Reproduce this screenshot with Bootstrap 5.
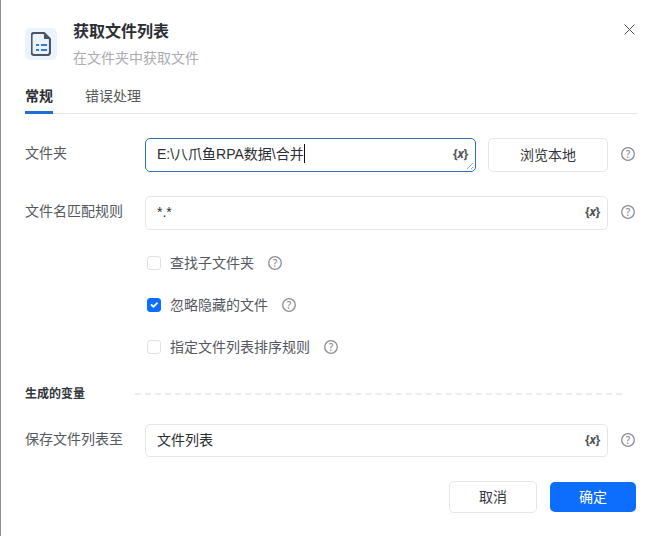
<!DOCTYPE html>
<html lang="zh-CN">

<head>
    <meta charset="UTF-8">
    <meta name="viewport" content="width=device-width, initial-scale=1.0">
    <link rel="stylesheet" href="https://cdn.jsdelivr.net/npm/bootstrap@5.3.1/dist/css/bootstrap.min.css">
    <title>获取文件列表</title>
    <style>
        html, body { height: 536px; overflow: hidden; }
        body {
            font-family: "Noto Sans", "Noto Sans CJK SC", sans-serif;
            font-size: 14px;
            color: #33363b;
            background: #fff;
        }
        .dialog { height: 536px; border-left: 1px solid #8f8f8f; padding: 0 18px 0 24px; }
        .dialog-head { padding-top: 19px; height: 86px; }
        .tile { width: 32px; height: 32px; margin-top: 9px; margin-right: 16px; background: #edf3fc; border-radius: 5px; }
        .title { font-size: 16px; font-weight: 700; line-height: 24px; color: #2b2e33; }
        .subtitle { line-height: 20px; margin-top: 5px; color: #a9acb1; }
        .btn-close-x { width: 11px; height: 11px; margin: 5px 1px 0 0; border: 0; padding: 0; background: none; }
        .tabs { height: 28px; margin-right: -1px; border-bottom: 1px solid #e3e4e6; gap: 32px; }
        .tab { line-height: 20px; padding-bottom: 8px; height: 28px; color: #55585e; }
        .tab.active { font-weight: 700; color: #2b2e33; border-bottom: 3px solid #1f6fd6; }
        .row-folder { margin-top: 24px; }
        .row-pattern { margin-top: 24px; }
        .row-save { margin-top: 21px; }
        .field-row { height: 34px; }
        .row-save.field-row { height: 33px; }
        .field-label { width: 120px; flex: none; line-height: 30px; color: #55585e; }
        .field {
            height: 100%;
            border: 1px solid #e4e5e7;
            border-radius: 5px;
            padding: 0 7px 0 11px;
            font-family: "Liberation Sans", "Noto Sans CJK SC", sans-serif;
            font-size: 14px;
            color: #2b2e33;
            line-height: 30px;
        }
        .field.focused { border-color: #2a6fb8; }
        .caret-bar { display: inline-block; width: 1px; height: 19px; background: #111; vertical-align: -4px; }
        .var-tag { font-family: "Noto Sans", sans-serif; font-size: 12px; font-weight: 700; color: #4d5157; letter-spacing: -0.3px; }
        .resize-grip { position: absolute; right: 1px; bottom: 1px; width: 8px; height: 8px; }
        .browse-btn {
            width: 120px;
            height: 34px;
            margin-left: 12px;
            border: 1px solid #e4e5e7;
            border-radius: 5px;
            background: #fff;
            color: #33363b;
            font-size: 14px;
            padding: 0 0 2px;
        }
        .help { width: 14px; height: 14px; flex: none; }
        .field-row .help { margin: 0 1px 2px 13px; }
        .row-save .help { margin-bottom: 1px; }
        .check-row { height: 16px; margin-left: 120px; margin-top: 26px; color: #55585e; }
        .check-row.first { margin-top: 25px; }
        .check-row .form-check-input {
            width: 14px;
            height: 14px;
            margin: 0 9px 0 2px;
            border-color: #dfe0e2;
            border-radius: 3px;
        }
        .check-row .form-check-input:checked { background-color: #0d6efd; border-color: #0d6efd; }
        .check-row label { margin-right: 14px; padding-bottom: 2px; }
        .section { margin-top: 30px; }
        .section-title { font-size: 12px; font-weight: 700; color: #33363b; line-height: 18px; width: 110px; flex: none; }
        .section-line { border-top: 2px dashed #ececed; margin-right: 14px; }
        .actions { margin-top: 24px; gap: 13px; }
        .act-btn { padding: 0 0 2px; font-size: 14px; border-radius: 5px; }
        .act-cancel { width: 88px; height: 32px; border: 1px solid #e4e5e7; background: #fff; color: #33363b; }
        .act-ok { width: 86px; height: 30px; border: 0; background: #0d6efd; color: #fff; }
    </style>
</head>

<body>
    <svg class="d-none">
        <symbol id="help-icon" viewBox="0 0 14 14">
            <circle cx="7" cy="7" r="6.300" fill="none" stroke="#8a8d93" stroke-width="1.300" />
            <text x="7" y="10.500" text-anchor="middle" font-size="10" font-weight="500" fill="#8a8d93">?</text>
        </symbol>
    </svg>

    <div class="dialog d-flex flex-column">
        <div class="dialog-head d-flex">
            <div class="tile d-flex align-items-center justify-content-center flex-shrink-0">
                <svg width="20" height="24" viewBox="0 0 20 24" fill="none">
                    <path d="M3 1h10l6 6v13.500a2.500 2.500 0 0 1-2.500 2.500h-13.500a2.500 2.500 0 0 1-2.500-2.500v-17a2.500 2.500 0 0 1 2.500-2.500z" stroke="#4b5566" stroke-width="2.200" />
                    <path d="M13 1v6h6z" fill="#4b5566" />
                    <path d="M5 13h3M10 13h6M5 18h3M10 18h6" stroke="#2f7bd9" stroke-width="2" />
                </svg>
            </div>
            <div class="flex-grow-1">
                <div class="title">获取文件列表</div>
                <div class="subtitle">在文件夹中获取文件</div>
            </div>
            <button class="btn-close-x" type="button" aria-label="关闭">
                <svg class="d-block" width="11" height="11" viewBox="0 0 11 11">
                    <path d="M.5.5l10 10M10.500.5l-10 10" stroke="#4a4d52" stroke-width="1" />
                </svg>
            </button>
        </div>

        <div class="tabs d-flex">
            <div class="tab active">常规</div>
            <div class="tab">错误处理</div>
        </div>

        <div class="field-row row-folder d-flex align-items-center">
            <div class="field-label align-self-start">文件夹</div>
            <div class="field focused position-relative d-flex justify-content-between flex-grow-1">
                <span>E:\八爪鱼RPA数据\合并<span class="caret-bar"></span></span>
                <span class="var-tag">{<i>x</i>}</span>
                <svg class="resize-grip" viewBox="0 0 8 8"><path d="M1 7l6-6M5 7l2-2" stroke="#a8abb0" stroke-width="1" /></svg>
            </div>
            <button class="browse-btn" type="button">浏览本地</button>
            <svg class="help"><use href="#help-icon" /></svg>
        </div>

        <div class="field-row row-pattern d-flex align-items-center">
            <div class="field-label align-self-start">文件名匹配规则</div>
            <div class="field d-flex justify-content-between flex-grow-1">
                <span>*.*</span>
                <span class="var-tag">{<i>x</i>}</span>
            </div>
            <svg class="help"><use href="#help-icon" /></svg>
        </div>

        <div class="check-row first d-flex align-items-center">
            <input class="form-check-input" type="checkbox" id="sub">
            <label for="sub">查找子文件夹</label>
            <svg class="help"><use href="#help-icon" /></svg>
        </div>
        <div class="check-row d-flex align-items-center">
            <input class="form-check-input" type="checkbox" id="hidden" checked>
            <label for="hidden">忽略隐藏的文件</label>
            <svg class="help"><use href="#help-icon" /></svg>
        </div>
        <div class="check-row d-flex align-items-center">
            <input class="form-check-input" type="checkbox" id="order">
            <label for="order">指定文件列表排序规则</label>
            <svg class="help"><use href="#help-icon" /></svg>
        </div>

        <div class="section d-flex align-items-center">
            <div class="section-title">生成的变量</div>
            <div class="section-line flex-grow-1"></div>
        </div>

        <div class="field-row row-save d-flex align-items-center">
            <div class="field-label align-self-start">保存文件列表至</div>
            <div class="field d-flex justify-content-between flex-grow-1">
                <span>文件列表</span>
                <span class="var-tag">{<i>x</i>}</span>
            </div>
            <svg class="help"><use href="#help-icon" /></svg>
        </div>

        <div class="actions d-flex justify-content-end align-items-center">
            <button class="btn act-btn act-cancel" type="button">取消</button>
            <button class="btn act-btn act-ok" type="button">确定</button>
        </div>
    </div>

    <script src="https://cdn.jsdelivr.net/npm/bootstrap@5.3.1/dist/js/bootstrap.bundle.min.js"></script>
</body>

</html>
